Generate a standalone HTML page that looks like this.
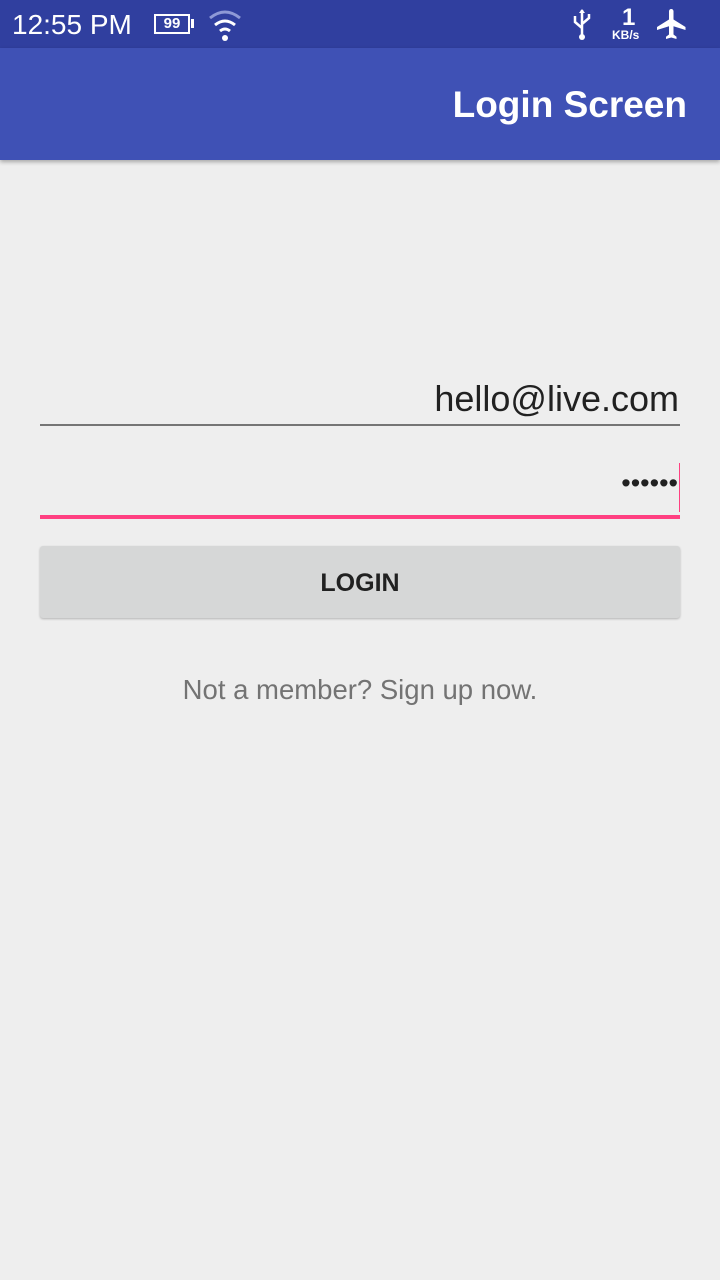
<!DOCTYPE html>
<html><head><style>
body{margin:0;width:720px;height:1280px;background:#eeeeee;font-family:"Liberation Sans",sans-serif;position:relative;overflow:hidden}
.sb{position:absolute;top:0;left:0;width:720px;height:48px;background:#303f9f;color:#fff}
.ab{position:absolute;top:48px;left:0;width:720px;height:112px;background:#3f51b5;box-shadow:0 2px 4px rgba(0,0,0,.3)}
.t{position:absolute;color:#fff}
</style></head><body>
<div class="sb">
<div class="t" style="left:12px;top:9px;font-size:28px">12:55 PM</div>
<div style="position:absolute;left:154px;top:14px;width:36px;height:20px;border:2px solid #fff;box-sizing:border-box;color:#fff;font-size:15px;font-weight:bold;text-align:center;line-height:16px">99</div>
<div style="position:absolute;left:191px;top:19px;width:3px;height:9px;background:#fff"></div>
<svg style="position:absolute;left:206px;top:8px" width="38" height="34" viewBox="0 0 38 34"><path d="M4 10 Q19 -2 34 10" stroke="#8e99d6" stroke-width="3" fill="none"/><path d="M9 17 Q19 9 29 17" stroke="#fff" stroke-width="3" fill="none"/><path d="M14 23 Q19 19 24 23" stroke="#fff" stroke-width="3" fill="none"/><circle cx="19" cy="30" r="3" fill="#fff"/></svg>
<svg style="position:absolute;left:570px;top:8px" width="24" height="34" viewBox="0 0 24 34"><path d="M12 2 L12 28 M12 20 L5 14 L5 8 M12 16 L19 10 L19 6" stroke="#fff" stroke-width="2.5" fill="none"/><circle cx="12" cy="29" r="3" fill="#fff"/><path d="M9 5 L12 1 L15 5Z" fill="#fff"/></svg>
<div class="t" style="left:622px;top:4px;font-size:24px;font-weight:bold">1</div>
<div class="t" style="left:612px;top:28px;font-size:12px;font-weight:bold">KB/s</div>
<svg style="position:absolute;left:654px;top:6px" width="36" height="36" viewBox="0 0 24 24"><path fill="#fff" d="M21 16v-2l-8-5V3.5c0-.83-.67-1.5-1.5-1.5S10 2.67 10 3.5V9l-8 5v2l8-2.5V19l-2 1.5V22l3.5-1 3.5 1v-1.5L13 19v-5.5l8 2.5z"/></svg>
</div>
<div class="ab"><div class="t" style="right:33px;top:36px;font-size:37px;font-weight:bold;letter-spacing:0px">Login Screen</div></div>
<div style="position:absolute;right:41px;top:378px;font-size:36px;color:#212121">hello@live.com</div>
<div style="position:absolute;left:40px;top:424px;width:640px;height:2px;background:#757575"></div>
<div style="position:absolute;right:42px;top:468px;font-size:27px;color:#212121;letter-spacing:0px">••••••</div>
<div style="position:absolute;left:679px;top:463px;width:1px;height:49px;background:#ff4081"></div>
<div style="position:absolute;left:40px;top:515px;width:640px;height:4px;background:#ff4081"></div>
<div style="position:absolute;left:40px;top:546px;width:640px;height:72px;background:#d6d7d7;border-radius:3px;box-shadow:0 1px 2px rgba(0,0,0,.25);text-align:center;line-height:74px;font-size:25px;color:#212121;font-weight:bold">LOGIN</div>
<div style="position:absolute;left:0;width:720px;top:674px;text-align:center;font-size:27.5px;color:#737373">Not a member? Sign up now.</div>
</body></html>
